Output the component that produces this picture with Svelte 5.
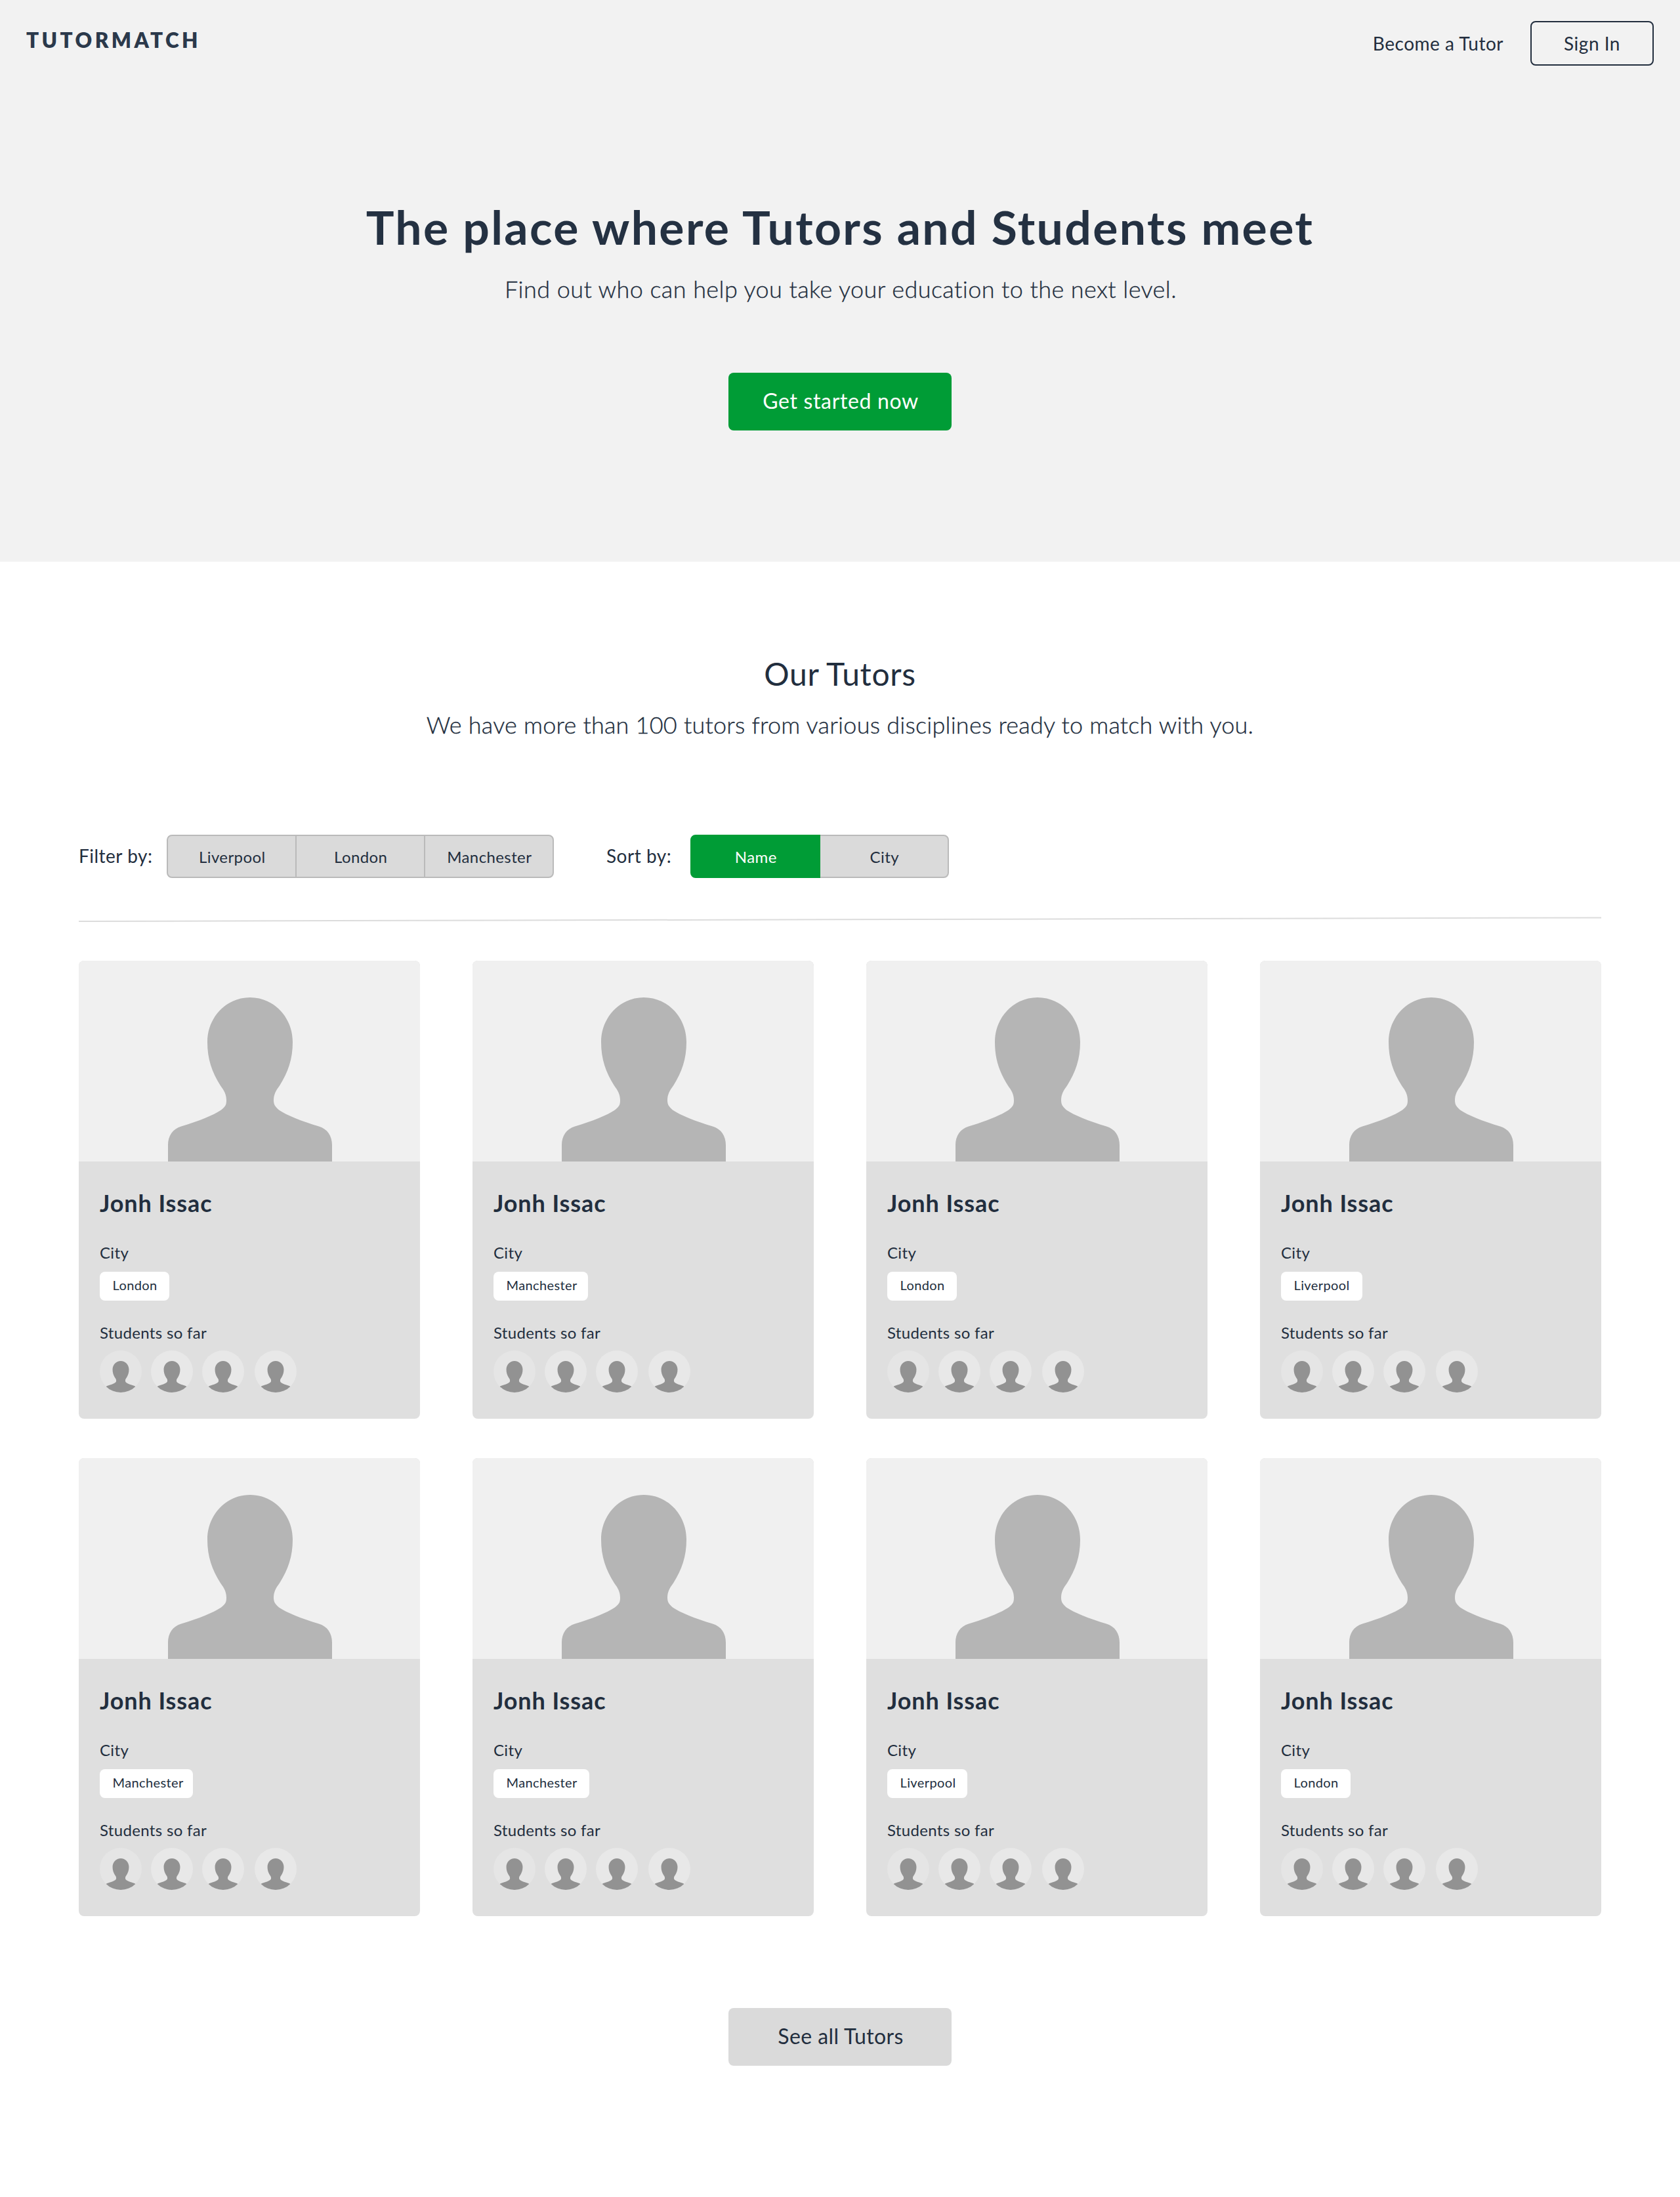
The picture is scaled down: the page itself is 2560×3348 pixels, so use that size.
<script>
  const cities = ['Liverpool', 'London', 'Manchester'];
  const sorts = ['Name', 'City'];
  const tutors = [
    { city: 'London', chip: 106 },
    { city: 'Manchester', chip: 144 },
    { city: 'London', chip: 106 },
    { city: 'Liverpool', chip: 124 },
    { city: 'Manchester', chip: 142 },
    { city: 'Manchester', chip: 146 },
    { city: 'Liverpool', chip: 122 },
    { city: 'London', chip: 106 },
  ];
  const students = [1, 2, 3, 4];
  const person =
    'M136 330V281C136 267 143 256.5 156 252.5C183 244.5 205 235.5 217 227.5C224 222 225 219 225 212.5C224.8 204 222 198.5 216 190.5C203 170 196 150 196 124C196 86 225 56 261 56C297 56 326 86 326 124C326 150 319 170 306 190.5C300 198.5 297.2 204 297 212.5C297 219 299 222 305 227.5C317 235.5 339 244.5 366 252.5C379 256.5 386 267 386 281V330Z';
  let sortBy = $state('Name');
</script>

<section class="hero">
  <header>
    <div class="logo">TUTORMATCH</div>
    <nav>
      <a href="#tutor">Become a Tutor</a>
      <button class="sign-in">Sign In</button>
    </nav>
  </header>
  <h1>The place where Tutors and Students meet</h1>
  <p class="lead">Find out who can help you take your education to the next level.</p>
  <button class="cta primary">Get started now</button>
</section>

<main>
  <h2>Our Tutors</h2>
  <p class="lead intro">We have more than 100 tutors from various disciplines ready to match with you.</p>

  <div class="toolbar">
    <span class="label filter-label">Filter by:</span>
    <div class="segments">
      {#each cities as city}
        <button class="segment">{city}</button>
      {/each}
    </div>
    <span class="label sort-label">Sort by:</span>
    <div class="segments">
      {#each sorts as sort}
        <button class="segment" class:active={sort === sortBy} onclick={() => (sortBy = sort)}>{sort}</button>
      {/each}
    </div>
  </div>

  <svg class="divider" viewBox="0 0 2320 10" aria-hidden="true">
    <line x1="0" y1="8" x2="2320" y2="2.5" stroke="#dcdcdc" stroke-width="2" />
  </svg>

  <div class="grid">
    {#each tutors as tutor}
      <article class="card">
        <svg class="photo" viewBox="0 0 520 306" aria-hidden="true">
          <path d={person} fill="#b5b5b5" />
        </svg>
        <div class="body">
          <h3>Jonh Issac</h3>
          <div class="caption">City</div>
          <div class="chip" style="width: {tutor.chip}px">{tutor.city}</div>
          <div class="caption students">Students so far</div>
          <div class="avatars">
            {#each students as student}
              <svg class="avatar" viewBox="0 0 64 64" aria-hidden="true">
                <path transform="translate(-18.1 5.25) scale(.192)" d={person} fill="#929292" />
              </svg>
            {/each}
          </div>
        </div>
      </article>
    {/each}
  </div>

  <button class="cta more">See all Tutors</button>
</main>

<style>
  :global(body) {
    margin: 0;
    background: #fff;
    color: #222e3e;
    font-family: Lato, "Open Sans", sans-serif;
  }
  h1, h2, h3, p { margin: 0; }
  button {
    margin: 0;
    padding: 0;
    border: 0;
    box-sizing: border-box;
    color: inherit;
    font-family: inherit;
    font-weight: 400;
    white-space: nowrap;
  }
  .hero {
    box-sizing: border-box;
    height: 856px;
    padding-top: 32px;
    background: #f2f2f2;
    display: flex;
    flex-direction: column;
    align-items: center;
  }
  header {
    align-self: stretch;
    display: flex;
    justify-content: space-between;
    align-items: flex-start;
    height: 68px;
    padding: 0 40px;
  }
  .logo {
    padding-top: 9px;
    font-size: 31.5px;
    line-height: 40px;
    font-weight: 800;
    letter-spacing: 4.4px;
    color: #2b394b;
  }
  nav {
    display: flex;
    gap: 41px;
    font-size: 28px;
    line-height: 68px;
    letter-spacing: 0.5px;
  }
  nav a {
    color: inherit;
    text-decoration: none;
  }
  .sign-in {
    width: 188px;
    height: 68px;
    border: 2px solid #222e3e;
    border-radius: 8px;
    background: none;
    font-size: 28px;
    letter-spacing: 0.5px;
  }
  h1 {
    margin-top: 201px;
    font-size: 71.5px;
    line-height: 88px;
    font-weight: 700;
    letter-spacing: 2.35px;
    color: #243142;
  }
  .lead {
    margin-top: 29px;
    padding-left: 2px;
    font-size: 36px;
    line-height: 44px;
    font-weight: 300;
    letter-spacing: 0.42px;
    -webkit-text-stroke: 0.35px currentColor;
  }
  .cta {
    width: 340px;
    height: 88px;
    padding: 0 0 3px 2px;
    border-radius: 8px;
    font-size: 32px;
    letter-spacing: 0.65px;
  }
  .primary {
    margin-top: 106px;
    background: #009c36;
    color: #fff;
  }
  main {
    box-sizing: border-box;
    height: 2492px;
    padding: 142px 120px 0;
    display: flex;
    flex-direction: column;
    align-items: center;
  }
  h2 {
    font-size: 48px;
    line-height: 58px;
    font-weight: 400;
    letter-spacing: 0.7px;
  }
  .intro {
    margin-top: 26px;
    padding-left: 0;
    letter-spacing: 0.22px;
  }
  .toolbar {
    align-self: stretch;
    display: flex;
    align-items: center;
    height: 66px;
    margin-top: 146px;
  }
  .label {
    padding-bottom: 2px;
    font-size: 28px;
    letter-spacing: 0.5px;
  }
  .filter-label { width: 134px; }
  .sort-label {
    width: 128px;
    margin-left: 80px;
  }
  .segments { display: flex; }
  .segment {
    width: 198px;
    height: 66px;
    padding-left: 1.5px;
    border: 2px solid #bababa;
    background: #dadada;
    font-size: 24px;
    letter-spacing: 0.4px;
  }
  .segment + .segment { margin-left: -2px; }
  .segment:first-child { border-radius: 8px 0 0 8px; }
  .segment:last-child { border-radius: 0 8px 8px 0; }
  .active {
    position: relative;
    border-color: #009c36;
    background: #009c36;
    color: #fff;
  }
  .divider {
    display: block;
    width: 2320px;
    height: 10px;
    margin-top: 58px;
  }
  .grid {
    display: grid;
    grid-template-columns: repeat(4, 520px);
    gap: 60px 80px;
    margin-top: 58px;
  }
  .card {
    height: 698px;
    border-radius: 8px;
    overflow: hidden;
    background: #dfdfdf;
  }
  .photo {
    display: block;
    width: 520px;
    height: 306px;
    background: #f0f0f0;
  }
  .body { padding: 41px 32px 0; }
  h3 {
    font-size: 36px;
    line-height: 44px;
    font-weight: 700;
    letter-spacing: 0.9px;
  }
  .caption {
    margin-top: 39px;
    font-size: 24px;
    line-height: 30px;
    letter-spacing: 0.33px;
  }
  .chip {
    box-sizing: border-box;
    height: 44px;
    margin-top: 14px;
    padding-left: 19.5px;
    border-radius: 8px;
    background: #fff;
    font-size: 20px;
    line-height: 41px;
    letter-spacing: 0.4px;
  }
  .students { margin-top: 34px; }
  .avatars {
    display: flex;
    gap: 14px;
    margin-top: 12px;
  }
  .avatar {
    width: 64px;
    height: 64px;
    border-radius: 50%;
    overflow: hidden;
    background: #e8e8e8;
  }
  .avatar:first-child { background: #e5e5e5; }
  .avatar:last-child { margin-left: 2px; }
  .more {
    margin-top: 140px;
    background: #dadada;
    letter-spacing: 0.4px;
  }
</style>
